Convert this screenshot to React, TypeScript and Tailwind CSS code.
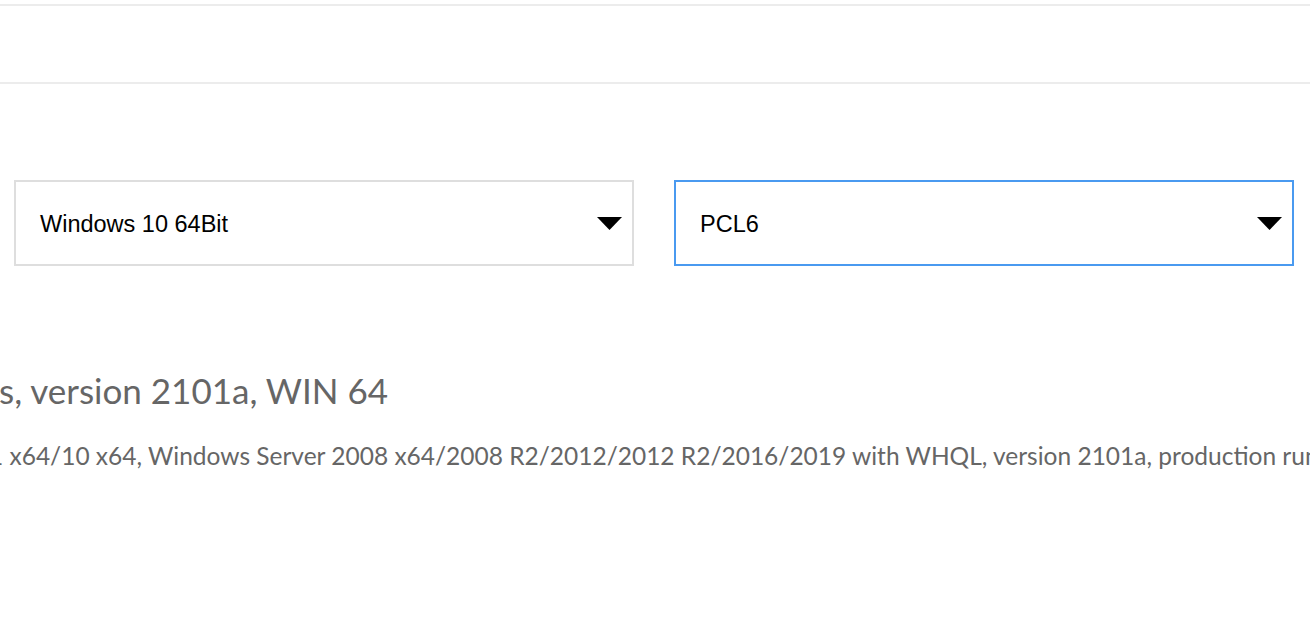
export default function App() {
  const Arrow = () => (
    <svg width="25" height="13" viewBox="0 0 25 13" className="shrink-0">
      <polygon points="0,0 25,0 12.5,13" fill="#000" />
    </svg>
  );
  return (
    <div className="w-[1310px] h-[628px] bg-white overflow-hidden relative">
      <div className="h-[4px]" />
      <div className="h-[2px] bg-[#ececec]" />
      <div className="h-[76px]" />
      <div className="h-[2px] bg-[#ececec]" />
      <div className="h-[96px]" />
      <div className="grid grid-cols-2 gap-[40px] pl-[14px] pr-[16px]">
        <div className="h-[86px] border-2 border-[#dedede] flex items-center justify-between pl-[24px] pr-[10px]">
          <span className="text-[23.5px] text-black pt-[3px]" style={{ fontFamily: '"Liberation Sans", Arial, sans-serif' }}>Windows 10 64Bit</span>
          <Arrow />
        </div>
        <div className="h-[86px] border-2 border-[#4a9af0] flex items-center justify-between pl-[24px] pr-[10px]">
          <span className="text-[23.5px] text-black pt-[3px]" style={{ fontFamily: '"Liberation Sans", Arial, sans-serif' }}>PCL6</span>
          <Arrow />
        </div>
      </div>
      <div className="overflow-hidden" style={{ fontFamily: 'Lato, "Open Sans", sans-serif' }}>
        <div className="mt-[104px] text-[35px] leading-[40px] text-[#666] whitespace-nowrap -ml-[1px]">s, version 2101a, WIN 64</div>
        <div className="mt-[30px] text-[24.5px] leading-[32px] text-[#666] whitespace-nowrap -ml-[11px]">1 x64/10 x64, Windows Server 2008 x64/2008 R2/2012/2012 R2/2016/2019 with WHQL, version 2101a, production run</div>
      </div>
    </div>
  );
}
